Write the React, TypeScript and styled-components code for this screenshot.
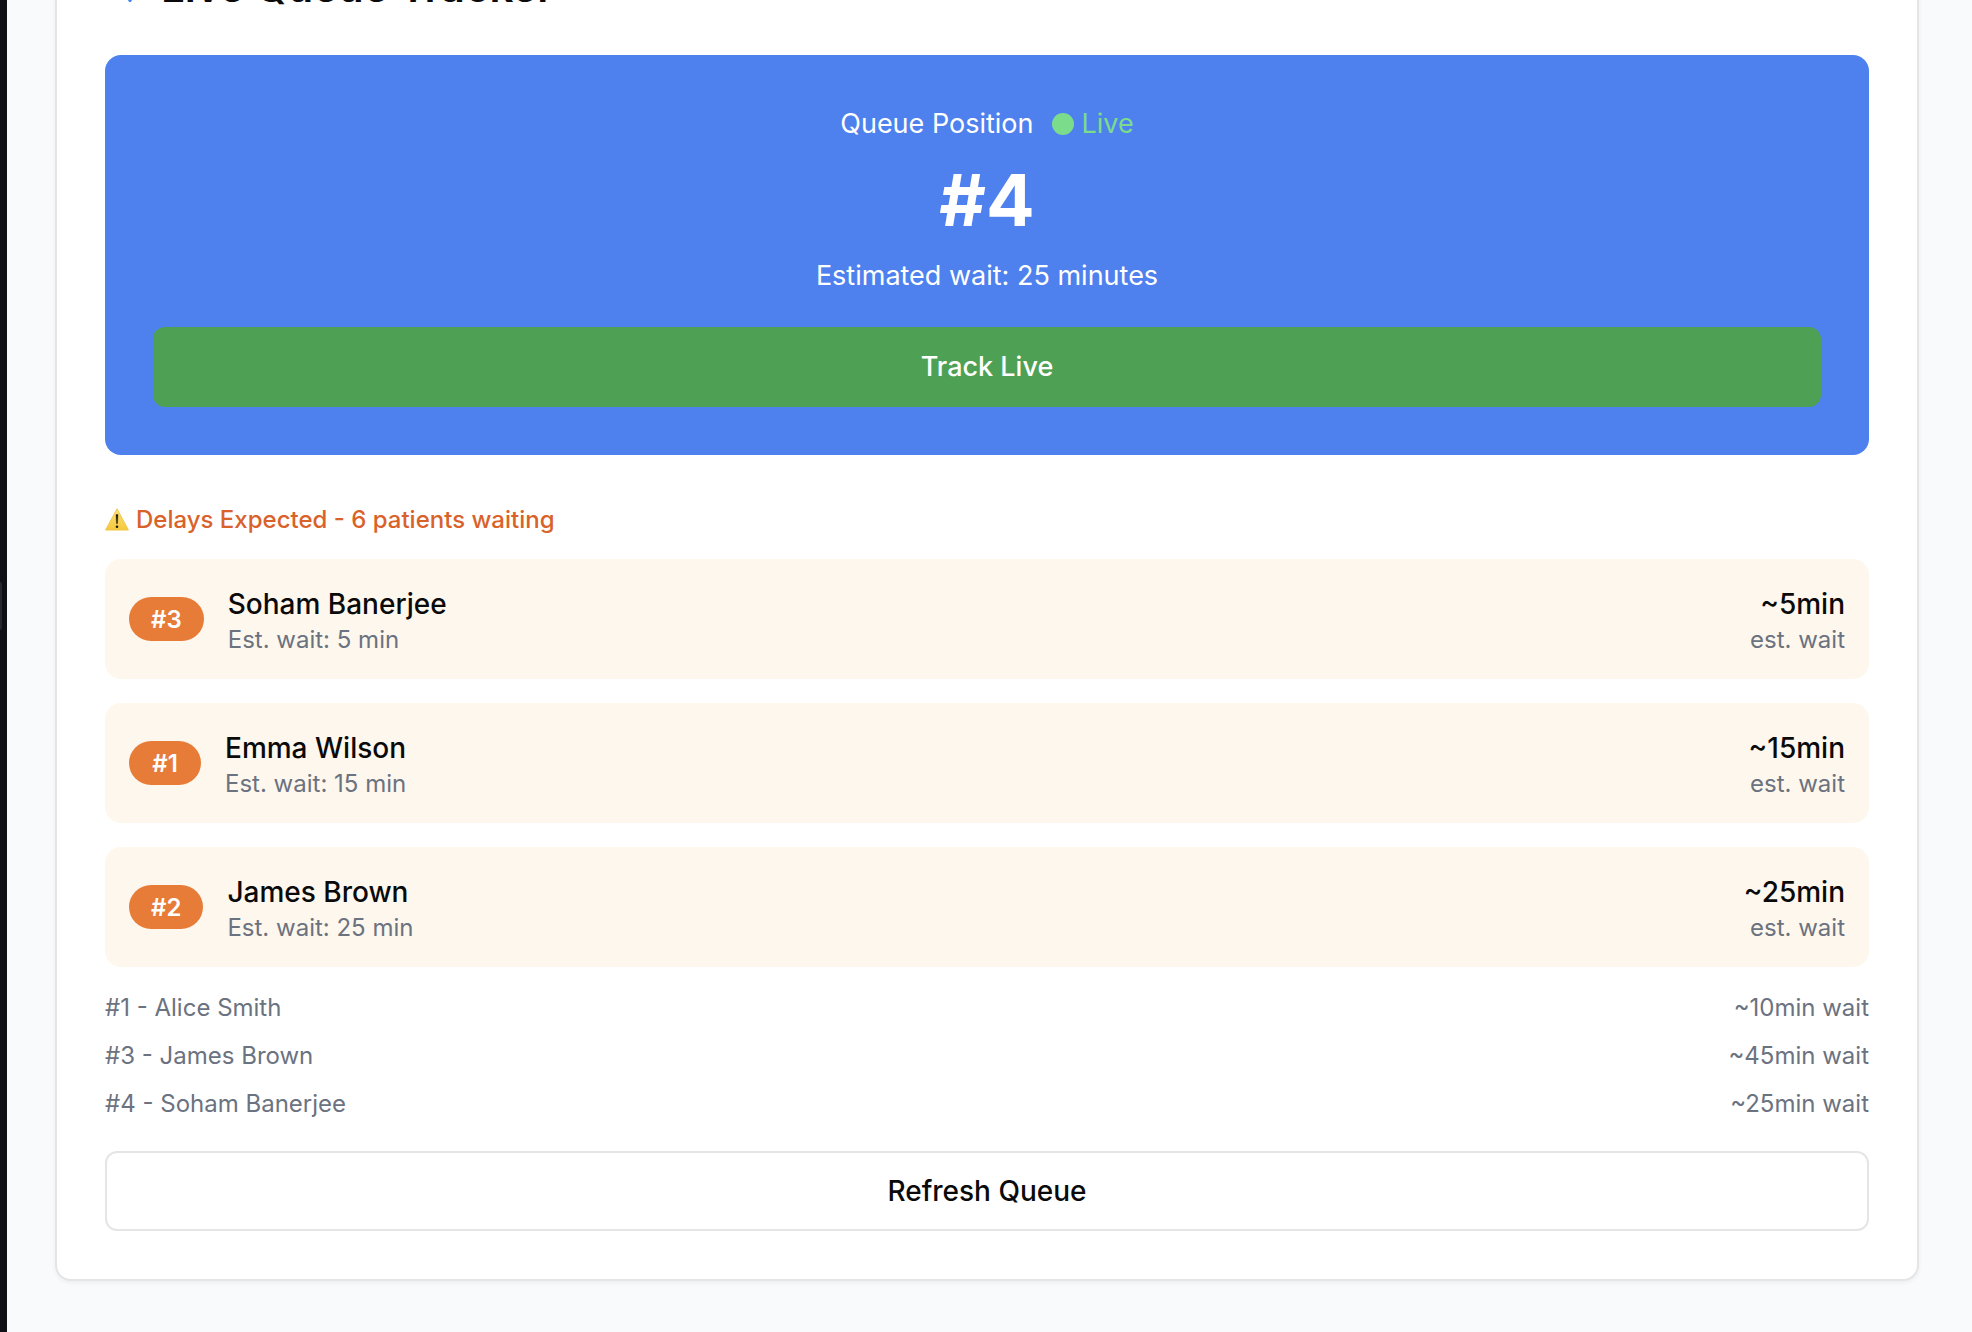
import React from "react";
import styled, { createGlobalStyle } from "styled-components";

const GlobalStyle = createGlobalStyle`
  *, *::before, *::after { box-sizing: border-box; }
  body {
    margin: 0;
    background: #f8fafc;
    color: #0a0a0a;
    font-family: Inter, "Liberation Sans", sans-serif;
    font-size: 28px;
    line-height: 40px;
  }
  h2, p, ul { margin: 0; padding: 0; }
  ul { list-style: none; }
  button { font: inherit; cursor: pointer; }
`;

const Page = styled.div`
  display: flex;
  min-height: 100vh;
  overflow: hidden;
`;

const SidebarEdge = styled.aside`
  display: flex;
  align-items: center;
  flex: 0 0 7px;
  background: #0f0f17;
`;

const SidebarHandle = styled.span`
  width: 2px;
  height: 48px;
  margin-bottom: 120px;
  border-radius: 0 2px 2px 0;
  background: #27272f;
`;

const Main = styled.main`
  flex: 1;
  min-width: 0;
  margin-top: -83px;
  padding: 0 53px 48px 48px;
`;

const Card = styled.section`
  padding: 48px;
  border: 2px solid #e5e5e5;
  border-radius: 16px;
  background: #ffffff;
  box-shadow: 0 2px 4px rgba(0, 0, 0, 0.05);
`;

const CardTitle = styled.h2`
  display: flex;
  align-items: center;
  gap: 16px;
  margin-bottom: 48px;
  font-size: 42px;
  font-weight: 600;
  line-height: 40px;
`;

const PositionPanel = styled.div`
  display: flex;
  flex-direction: column;
  align-items: center;
  padding: 49px 48px 48px;
  border-radius: 16px;
  background: #4e81ee;
  color: #ffffff;
  font-size: 27px;
`;

const PositionHeading = styled.div`
  display: flex;
  align-items: center;
  gap: 18px;
`;

const LiveStatus = styled.span`
  display: flex;
  align-items: center;
  gap: 8px;
  color: #7bdc8b;
`;

const LiveDot = styled.span`
  width: 22px;
  height: 22px;
  border-radius: 50%;
  background: currentColor;
`;

const PositionNumber = styled.p`
  margin: 16px 0;
  font-size: 72px;
  font-weight: 700;
  line-height: 80px;
`;

const Button = styled.button<{ $outline?: boolean }>`
  width: 100%;
  height: 80px;
  margin-top: 31px;
  border: ${(p) => (p.$outline ? "2px solid #e5e5e5" : "0")};
  border-radius: 12px;
  background: ${(p) => (p.$outline ? "#ffffff" : "#4ea154")};
  color: ${(p) => (p.$outline ? "#0a0a0a" : "#ffffff")};
  font-weight: 500;
`;

const DelayNotice = styled.p`
  display: flex;
  align-items: center;
  gap: 7px;
  margin: 49px 0 23px;
  color: #d9622b;
  font-size: 24px;
  font-weight: 500;
  line-height: 32px;
`;

const DelayList = styled.ul`
  display: flex;
  flex-direction: column;
  gap: 24px;
  margin-bottom: 25px;
`;

const DelayItem = styled.li`
  display: flex;
  align-items: center;
  gap: 24px;
  padding: 0 24px;
  border-radius: 16px;
  background: #fef7ed;
`;

const Badge = styled.span`
  min-width: 72px;
  padding: 7px 22px 5px;
  border-radius: 22px;
  background: #e77c38;
  color: #ffffff;
  font-size: 24px;
  font-weight: 600;
  line-height: 32px;
  text-align: center;
`;

const Details = styled.div<{ $end?: boolean }>`
  margin-left: ${(p) => (p.$end ? "auto" : "0")};
  padding: 25px 0 23px;
  text-align: ${(p) => (p.$end ? "right" : "left")};
`;

const Primary = styled.p`
  font-weight: 500;
`;

const Secondary = styled.p`
  color: #6b7280;
  font-size: 24px;
  line-height: 32px;
`;

const QueueList = styled.ul`
  display: flex;
  flex-direction: column;
  gap: 16px;
`;

const QueueRow = styled.li`
  display: flex;
  justify-content: space-between;
  color: #6b7280;
  font-size: 24px;
  line-height: 32px;
`;

const ActivityIcon = () => (
  <svg width="40" height="40" viewBox="0 0 24 24" fill="none" stroke="#3b82f6" strokeWidth="2" strokeLinecap="round" strokeLinejoin="round" aria-hidden="true">
    <path d="M22 12h-4l-3 8L9 3l-3 9H2" />
  </svg>
);

const WarningIcon = () => (
  <svg width="24" height="24" viewBox="0 0 24 24" aria-hidden="true">
    <defs>
      <linearGradient id="warning-fill" x1="0" y1="0" x2="0" y2="1">
        <stop offset="0" stopColor="#fbe27a" />
        <stop offset="1" stopColor="#f6c93c" />
      </linearGradient>
    </defs>
    <path d="M12 .8 23.4 22H.6Z" fill="url(#warning-fill)" stroke="#efc648" strokeWidth="1" strokeLinejoin="round" />
    <path d="M11 6.6h2l-.5 9h-1Z" fill="#1c1a10" stroke="#1c1a10" strokeWidth=".4" strokeLinejoin="round" />
    <circle cx="12" cy="18.8" r="1.3" fill="#1c1a10" />
  </svg>
);

const delayed = [
  { position: 3, name: "Soham Banerjee", wait: 5 },
  { position: 1, name: "Emma Wilson", wait: 15 },
  { position: 2, name: "James Brown", wait: 25 },
];

const queue = [
  { position: 1, name: "Alice Smith", wait: 10 },
  { position: 3, name: "James Brown", wait: 45 },
  { position: 4, name: "Soham Banerjee", wait: 25 },
];

export default function App() {
  return (
    <>
      <GlobalStyle />
      <Page>
        <SidebarEdge>
          <SidebarHandle />
        </SidebarEdge>
        <Main>
          <Card>
            <CardTitle>
              <ActivityIcon />
              Live Queue Tracker
            </CardTitle>
            <PositionPanel>
              <PositionHeading>
                <span>Queue Position</span>
                <LiveStatus>
                  <LiveDot />
                  Live
                </LiveStatus>
              </PositionHeading>
              <PositionNumber>#4</PositionNumber>
              <p>Estimated wait: 25 minutes</p>
              <Button type="button">Track Live</Button>
            </PositionPanel>
            <DelayNotice>
              <WarningIcon />
              Delays Expected - 6 patients waiting
            </DelayNotice>
            <DelayList>
              {delayed.map((p) => (
                <DelayItem key={p.position}>
                  <Badge>{`#${p.position}`}</Badge>
                  <Details>
                    <Primary>{p.name}</Primary>
                    <Secondary>{`Est. wait: ${p.wait} min`}</Secondary>
                  </Details>
                  <Details $end>
                    <Primary>{`~${p.wait}min`}</Primary>
                    <Secondary>est. wait</Secondary>
                  </Details>
                </DelayItem>
              ))}
            </DelayList>
            <QueueList>
              {queue.map((p) => (
                <QueueRow key={p.position}>
                  <span>{`#${p.position} - ${p.name}`}</span>
                  <span>{`~${p.wait}min wait`}</span>
                </QueueRow>
              ))}
            </QueueList>
            <Button type="button" $outline>
              Refresh Queue
            </Button>
          </Card>
        </Main>
      </Page>
    </>
  );
}
